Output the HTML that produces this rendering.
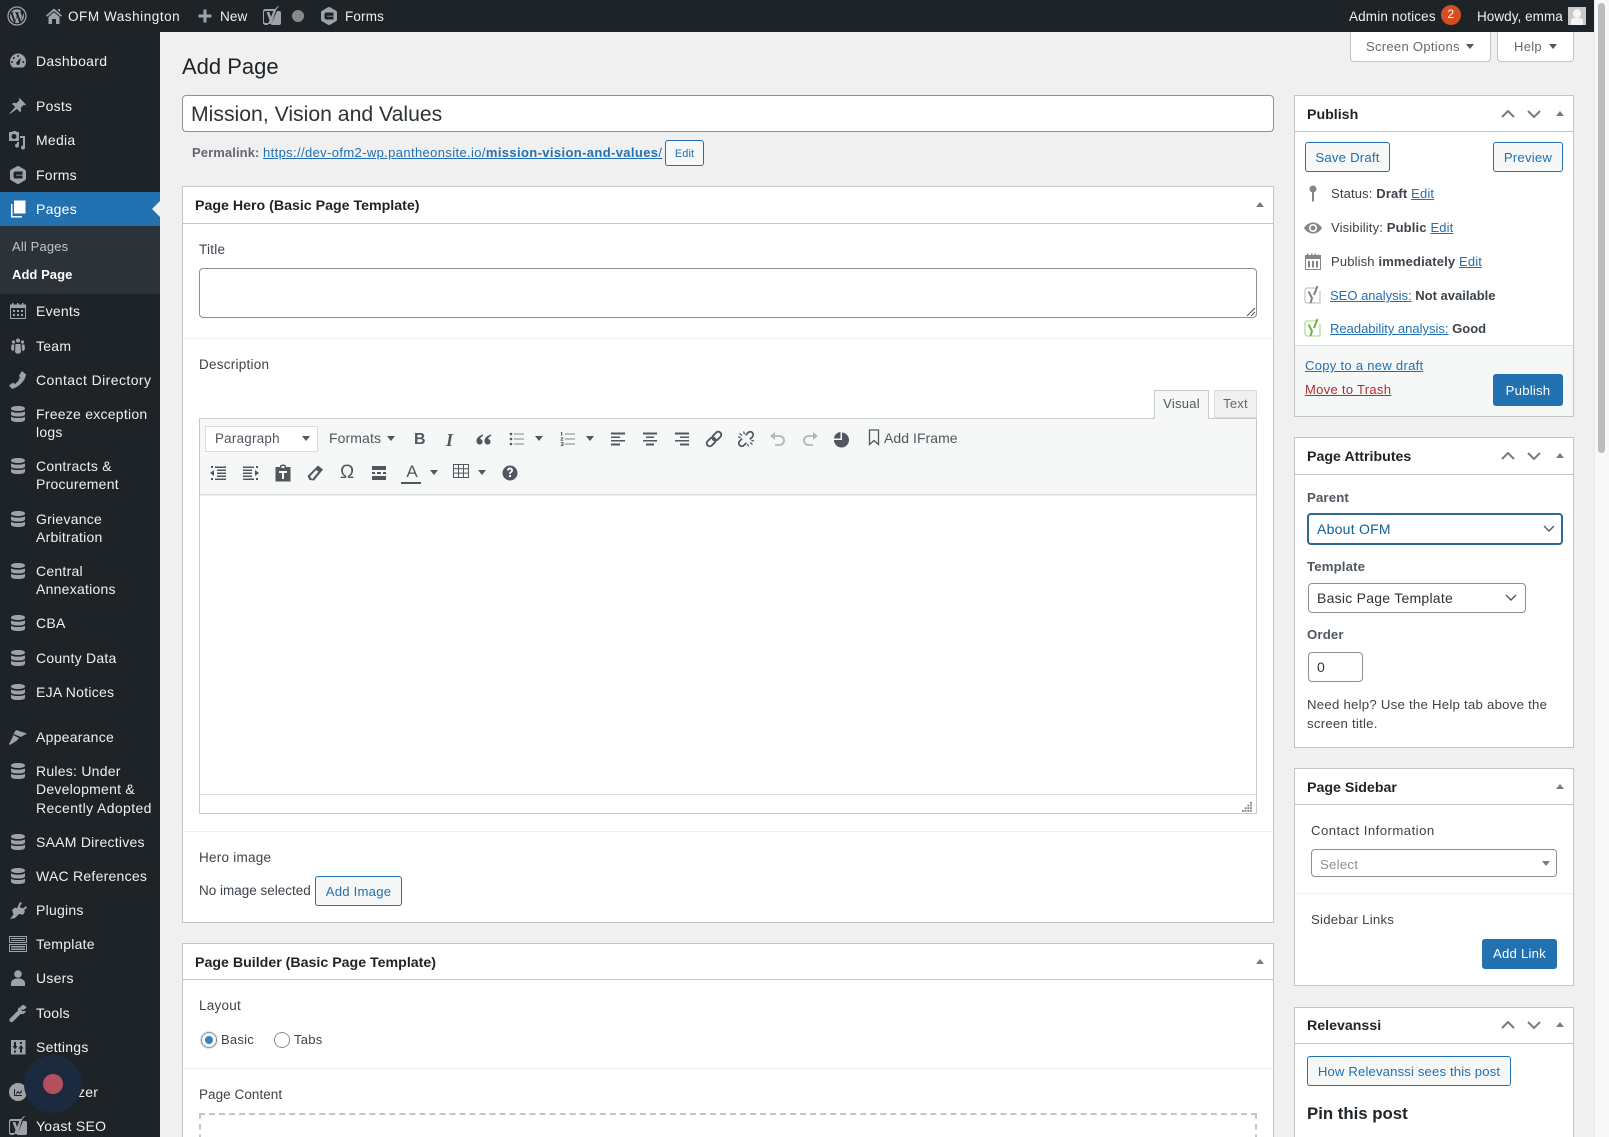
<!DOCTYPE html>
<html lang="en"><head><meta charset="utf-8"><title>Add Page</title>
<style>
*{box-sizing:border-box}
html{margin:0;padding:0;width:1609px;height:1137px;overflow:hidden}
body{margin:0;padding:0;width:1609px;height:1137px;overflow:hidden;background:#f0f0f1;position:relative;font-family:"Liberation Sans",sans-serif;font-size:13.5px;color:#3c434a;letter-spacing:.25px}
#w{position:absolute;left:0;top:0;width:1609px;height:1137px;overflow:hidden}
.t{position:absolute;white-space:nowrap;line-height:20px}
.b{position:absolute}
.s{color:#f0f0f1;font-size:14px;left:36px;letter-spacing:.25px}
.ab{color:#f0f0f1;font-size:13.5px;top:7px;letter-spacing:.15px}
svg{position:absolute;overflow:visible}
.ic{width:20px;height:20px;left:8px;fill:#9ea3a8}
.tb{width:20px;height:20px;fill:#50575e}
.p{position:absolute;background:#fff;border:1px solid #c3c4c7}
.h{position:absolute;height:1px;background:#c3c4c7}
.sep{position:absolute;height:1px;background:#f0f0f1}
.hd{font-weight:bold;color:#1d2327;font-size:14.2px;letter-spacing:0}
.btn{position:absolute;border:1px solid #2271b1;border-radius:3px;background:#f6f7f7;color:#2271b1;text-align:center;font-size:13.2px;letter-spacing:.2px}
.pri{position:absolute;background:#2271b1;border-radius:3px;color:#fff;text-align:center;font-size:13.2px;font-weight:500;letter-spacing:.2px}
.in{position:absolute;background:#fff;border:1px solid #8c8f94;border-radius:4px}
a{color:#2271b1;text-decoration:underline}
.ch{fill:none;stroke:#787c82;stroke-width:2}
.tri{position:absolute;width:0;height:0;border-left:4px solid transparent;border-right:4px solid transparent;border-top:5px solid #50575e}
.up{position:absolute;width:0;height:0;border-left:4px solid transparent;border-right:4px solid transparent;border-bottom:5px solid #787c82}
.st{position:absolute;width:20px;height:20px;fill:#82878c}
.l{font-size:13.2px;font-weight:bold;color:#50575e;letter-spacing:.15px}
.m{font-size:13px;letter-spacing:.15px}
.n{font-size:13px;letter-spacing:0}
b{font-weight:bold}
</style></head><body><div id="w">
<svg width="0" height="0" style="position:absolute"><defs>
<symbol id="db" viewBox="0 0 20 20"><path d="M3 4.500C3 2.800 6 2 10 2s7 .8 7 2.500-3 2.500-7 2.500-7-.8-7-2.500z"/><path d="M3 7.200C4 8.300 7 8.600 10 8.600s6-.3 7-1.400v3c0 1.500-3 2.300-7 2.300s-7-.8-7-2.300z"/><path d="M3 12.600C4 13.700 7 14 10 14s6-.3 7-1.400v3c0 1.600-3 2.400-7 2.400s-7-.8-7-2.400z"/></symbol>
<symbol id="hex" viewBox="0 0 20 20"><path fill-rule="evenodd" d="M9 1.300a2 2 0 0 1 2 0l6 3.400a2 2 0 0 1 1 1.700v7.200a2 2 0 0 1-1 1.700l-6 3.400a2 2 0 0 1-2 0l-6-3.400a2 2 0 0 1-1-1.700V6.400a2 2 0 0 1 1-1.700zM7.500 6.500A2 2 0 0 0 5.500 8.500v3a2 2 0 0 0 2 2h7v-3H8V9.800h6.500V6.500z"/></symbol>
<symbol id="yo" viewBox="0 0 20 20"><path fill-rule="evenodd" d="M3 3h10l3-3h1l-3 4v0l-4.500 14H6l1.500-4L4.500 6h2.800l1.800 5 2.200-6H3.500A1.500 1.500 0 0 0 2 6.500v9A1.500 1.500 0 0 0 3.500 17H6v2H3a2.500 2.500 0 0 1-2-2.500v-11A2.500 2.500 0 0 1 3 3z"/><path d="M15 5h2a2 2 0 0 1 2 2v10a2 2 0 0 1-2 2h-8l1-2.500L15 5z"/></symbol>
<symbol id="up" viewBox="0 0 16 10"><path d="M2 8l6-6 6 6" fill="none" stroke="#787c82" stroke-width="2"/></symbol>
<symbol id="dn" viewBox="0 0 16 10"><path d="M2 2l6 6 6-6" fill="none" stroke="#787c82" stroke-width="2"/></symbol>
</defs></svg>

<!-- admin bar -->
<div class="b" style="left:0;top:0;width:1594px;height:32px;background:#1d2327"></div>
<div class="b" style="left:1594px;top:0;width:15px;height:1137px;background:#f8f8f8;border-left:1px solid #ececec"></div>
<div class="b" style="left:1598px;top:3px;width:7px;height:450px;background:#bdbdbd;border-radius:4px"></div>
<svg style="left:7px;top:6px;width:20px;height:20px"><circle cx="10" cy="10" r="9" fill="none" stroke="#9ea3a8" stroke-width="1.300"/><path fill="#9ea3a8" d="M3 10c0 2.800 1.600 5.200 4 6.300L3.600 7.100A7 7 0 0 0 3 10zm11.600-.4c0-.9-.3-1.500-.6-2-.3-.5-.6-1-.6-1.500 0-.6.4-1.100 1-1.100h.1A7 7 0 0 0 4.100 6.200h.4c.7 0 1.900-.1 1.900-.1.400 0 .4.500 0 .6l-.8.100 2.600 7.800 1.600-4.700L8.700 7l-.7-.2c-.4 0-.3-.6 0-.6 0 0 1.200.1 1.900.1s1.900-.1 1.900-.1c.4 0 .4.500 0 .6l-.8.100 2.600 7.700.7-2.400c.3-1 .5-1.700.5-2.300zM10.100 10.600l-2.100 6.200a7 7 0 0 0 4.300-.1l-.1-.1zm6-4a5 5 0 0 1 .1.800c0 .7-.1 1.500-.5 2.500l-2.100 6.100A7 7 0 0 0 16.100 6.600z"/></svg>
<svg style="left:44px;top:6px;width:20px;height:20px" viewBox="0 0 20 20" fill="#9ea3a8"><path d="M10 2.500l8 7-1.200 1.200L10 5 3.200 10.700 2 9.500zM14 3h2v3l-2-1.800zM4.500 11L10 6.300l5.500 4.700v7H12v-5H8v5H4.500z"/></svg>
<div class="t ab" style="left:68px;letter-spacing:.55px">OFM Washington</div>
<svg style="left:197px;top:7px;width:16px;height:18px" viewBox="0 0 16 18"><path d="M6.500 2.500h3v5h5v3h-5v5h-3v-5h-5v-3h5z" fill="#9ea3a8"/></svg>
<div class="t ab" style="left:220px">New</div>
<svg style="left:262px;top:5px;width:20px;height:22px;fill:#9ea3a8" viewBox="0 0 20 20"><use href="#yo"/></svg>
<div class="b" style="left:292px;top:10px;width:12px;height:12px;border-radius:50%;background:#888"></div>
<svg style="left:319px;top:6px;width:20px;height:20px;fill:#9ea3a8" viewBox="0 0 20 20"><use href="#hex"/></svg>
<div class="t ab" style="left:345px">Forms</div>
<div class="t ab" style="left:1349px">Admin notices</div>
<div class="b" style="left:1441px;top:5px;width:20px;height:20px;border-radius:50%;background:#d54e21;color:#fff;text-align:center;line-height:19px;font-size:12px">2</div>
<div class="t ab" style="left:1477px;letter-spacing:.05px">Howdy, emma</div>
<div class="b" style="left:1568px;top:7px;width:18px;height:18px;background:#c9c9c9;overflow:hidden"><div class="b" style="left:5px;top:2px;width:8px;height:9px;border-radius:50%;background:#f4f4f4"></div><div class="b" style="left:3px;top:11px;width:12px;height:9px;border-radius:3px 3px 0 0;background:#f4f4f4"></div></div>

<!-- sidebar -->
<div class="b" style="left:0;top:32px;width:160px;height:1105px;background:#1d2327"></div>
<div class="b" style="left:0;top:192px;width:160px;height:34px;background:#2271b1"></div>
<div class="b" style="left:0;top:226px;width:160px;height:68px;background:#2c3338"></div>
<div class="b" style="left:152px;top:201px;border-top:8px solid transparent;border-bottom:8px solid transparent;border-right:8px solid #f0f0f1"></div>

<svg class="ic" style="top:51px" viewBox="0 0 20 20"><path fill-rule="evenodd" d="M10 2.500a8 8 0 0 1 8 8c0 2.500-1 4.700-2.700 6H4.700A8 8 0 0 1 2 10.500a8 8 0 0 1 8-8zM9.300 10.500a1.800 1.800 0 1 0 2.500 1.600l1-4.600-.6-.2zM10 4a1 1 0 1 0 0 2 1 1 0 0 0 0-2zM5.800 6a1 1 0 1 0 0 2 1 1 0 0 0 0-2zM4 10a1 1 0 1 0 0 2 1 1 0 0 0 0-2zm11.300 0a1 1 0 1 0 0 2 1 1 0 0 0 0-2z"/></svg>
<div class="t s" style="top:51px;letter-spacing:.32px">Dashboard</div>
<svg class="ic" style="top:96px" viewBox="0 0 20 20"><path d="M11.500 2l6.500 6.500-1.200 1-1-.6-3 3 .4 3.100-1.200 1.100-3-3.200L2 18l-.5-.5 5.800-6.500-3.100-3L5.300 6.800l3.100.4 3-3-.6-1z"/></svg>
<div class="t s" style="top:96px">Posts</div>
<svg class="ic" style="top:130px" viewBox="0 0 20 20"><path fill-rule="evenodd" d="M1 2h3l1-1h3l1 1h2v9H1zm5 2a2.500 2.500 0 1 0 0 5 2.500 2.500 0 0 0 0-5z"/><path d="M13 5h5v11.500a2 2 0 1 1-2-2V7h-3zM12 11v3.500a2 2 0 1 1-2-1.900V11z" transform="translate(-1 1)"/></svg>
<div class="t s" style="top:130px">Media</div>
<svg class="ic" style="top:165px" viewBox="0 0 20 20"><use href="#hex"/></svg>
<div class="t s" style="top:165px">Forms</div>
<svg class="ic" style="top:199px;fill:#fff" viewBox="0 0 20 20"><path d="M6 1.500h11.500v13H6z"/><path d="M3 5h1.500v12H14v1.500H3z"/></svg>
<div class="t s" style="top:199px;color:#fff">Pages</div>
<div class="t" style="left:12px;top:237px;font-size:13px;color:#c3c4c7;letter-spacing:.15px">All Pages</div>
<div class="t" style="left:12px;top:265px;font-size:13px;color:#fff;font-weight:bold;letter-spacing:.05px">Add Page</div>

<svg class="ic" style="top:301px" viewBox="0 0 20 20"><path fill-rule="evenodd" d="M2 3.500h2V2h1.500v1.500h3.500V2h1.500v1.500h3.500V2h1.500v1.500h2.500V18H2zM3 7v10h14V7zm2 2h2v2H5zm4 0h2v2H9zm4 0h2v2h-2zM5 13h2v2H5zm4 0h2v2H9zm4 0h2v2h-2z"/></svg>
<div class="t s" style="top:301px">Events</div>
<svg class="ic" style="top:336px" viewBox="0 0 20 20"><circle cx="10" cy="4.500" r="2"/><circle cx="5.500" cy="6" r="1.600"/><circle cx="14.500" cy="6" r="1.600"/><path d="M7.500 8h5l.5 8-1.200 1.500H8.200L7 16zM3.500 8.500h2.800L6 14.500 4.500 15l-1.500-2zM13.700 8.500h2.800l.5 4.500-1.500 2-1.500-.5z"/></svg>
<div class="t s" style="top:336px">Team</div>
<svg class="ic" style="top:370px" viewBox="0 0 20 20"><path d="M14 1l4 3.500c-.3 5-6 12-14 14.500l-3-3.500 4-3 2 1.500c2-1.500 4-4 5-6.500L11 5.500z"/></svg>
<div class="t s" style="top:370px;letter-spacing:.43px">Contact Directory</div>
<svg class="ic" style="top:404px" viewBox="0 0 20 20"><use href="#db"/></svg>
<div class="t s" style="top:404px">Freeze exception</div><div class="t s" style="top:422px">logs</div>
<svg class="ic" style="top:456px" viewBox="0 0 20 20"><use href="#db"/></svg>
<div class="t s" style="top:456px">Contracts &amp;</div><div class="t s" style="top:474px">Procurement</div>
<svg class="ic" style="top:509px" viewBox="0 0 20 20"><use href="#db"/></svg>
<div class="t s" style="top:509px">Grievance</div><div class="t s" style="top:527px">Arbitration</div>
<svg class="ic" style="top:561px" viewBox="0 0 20 20"><use href="#db"/></svg>
<div class="t s" style="top:561px">Central</div><div class="t s" style="top:579px">Annexations</div>
<svg class="ic" style="top:613px" viewBox="0 0 20 20"><use href="#db"/></svg>
<div class="t s" style="top:613px">CBA</div>
<svg class="ic" style="top:648px" viewBox="0 0 20 20"><use href="#db"/></svg>
<div class="t s" style="top:648px">County Data</div>
<svg class="ic" style="top:682px" viewBox="0 0 20 20"><use href="#db"/></svg>
<div class="t s" style="top:682px">EJA Notices</div>
<svg class="ic" style="top:727px" viewBox="0 0 20 20"><path d="M8 3l11 3.500-6 3.500L5.500 7zM5 8l6 3-2 2.500L2 18l-1-1 3.500-6.500z"/></svg>
<div class="t s" style="top:727px">Appearance</div>
<svg class="ic" style="top:761px" viewBox="0 0 20 20"><use href="#db"/></svg>
<div class="t s" style="top:761px">Rules: Under</div><div class="t s" style="top:779px">Development &amp;</div><div class="t s" style="top:798px;letter-spacing:.38px">Recently Adopted</div>
<svg class="ic" style="top:832px" viewBox="0 0 20 20"><use href="#db"/></svg>
<div class="t s" style="top:832px">SAAM Directives</div>
<svg class="ic" style="top:866px" viewBox="0 0 20 20"><use href="#db"/></svg>
<div class="t s" style="top:866px">WAC References</div>
<svg class="ic" style="top:900px" viewBox="0 0 20 20"><path d="M12 2l2 1-2.500 4L15 8.500l3-2.500 1 1.700-3 2.500 1 1.500-2 3-4-.7-4 4L2 19l3.500-4.500L4 10l3-2.500 2 .8z"/></svg>
<div class="t s" style="top:900px">Plugins</div>
<svg class="ic" style="top:934px" viewBox="0 0 20 20"><path fill-rule="evenodd" d="M1 2h18v7H1zm1 1v5h16V3zm1 1h14v1H3zm0 2h14v1H3zM1 10h18v8H1zm1 1v6h16v-6zm1 1h14v1.500H3zm0 2.500h14V16H3z"/></svg>
<div class="t s" style="top:934px">Template</div>
<svg class="ic" style="top:968px" viewBox="0 0 20 20"><circle cx="10" cy="6" r="3.800"/><path d="M3 18v-3c0-2.500 3-4 4.500-4.500h5C14 11 17 12.500 17 15v3z"/></svg>
<div class="t s" style="top:968px">Users</div>
<svg class="ic" style="top:1003px" viewBox="0 0 20 20"><path d="M14.500 2a4.500 4.500 0 0 1 4 2.500L15.500 7l-2.500-.8-.5-2.500L15 1.500zM12 4l2 4 4 0c-.7 2-3 3.500-5.500 3L5 18.500a2 2 0 0 1-3-3L10 7.500C9.700 6 10.500 4.500 12 4z"/></svg>
<div class="t s" style="top:1003px">Tools</div>
<svg class="ic" style="top:1037px" viewBox="0 0 20 20"><path fill-rule="evenodd" d="M3 3h14.500v14.500H3zM6 5v4H4.500L7 12.500 9.500 9H8V5zm0 8.500v2h2v-2zM14 15.500v-4h1.500L13 8l-2.500 3.500H12v4zM12 7h2V5h-2z"/></svg>
<div class="t s" style="top:1037px">Settings</div>
<svg class="ic" style="top:1082px" viewBox="0 0 20 20"><path fill-rule="evenodd" d="M10 1a9 9 0 1 1 0 18 9 9 0 0 1 0-18zM6 7v7h8v-1H7V7zm2 4l2-2 1.500 1.500L14 8v2l-2.500 2L10 10.500 8 12.500z"/></svg>
<div class="t s" style="top:1082px">Optimizer</div>
<svg class="ic" style="top:1116px" viewBox="0 0 20 20"><use href="#yo"/></svg>
<div class="t s" style="top:1116px">Yoast SEO</div>
<div class="b" style="left:24px;top:1055px;width:58px;height:58px;border-radius:50%;background:#1b2a3f"></div>
<div class="b" style="left:43px;top:1074px;width:20px;height:20px;border-radius:50%;background:#b4505e"></div>

<!-- screen options -->
<div class="b" style="left:1350px;top:32px;width:141px;height:30px;background:#fff;border:1px solid #c3c4c7;border-top:0;border-radius:0 0 4px 4px"></div>
<div class="t" style="left:1366px;top:37px;color:#646970;font-size:13px;letter-spacing:.3px">Screen Options</div>
<div class="tri" style="left:1466px;top:44px"></div>
<div class="b" style="left:1497px;top:32px;width:77px;height:30px;background:#fff;border:1px solid #c3c4c7;border-top:0;border-radius:0 0 4px 4px"></div>
<div class="t" style="left:1514px;top:37px;color:#646970;font-size:13px;letter-spacing:.3px">Help</div>
<div class="tri" style="left:1549px;top:44px"></div>

<div class="t" style="left:182px;top:53px;font-size:22px;line-height:28px;color:#1d2327;letter-spacing:0">Add Page</div>
<div class="in" style="left:182px;top:95px;width:1092px;height:37px"></div>
<div class="t" style="left:191px;top:99px;font-size:21.200px;line-height:32px;color:#2c3338;letter-spacing:0">Mission, Vision and Values</div>
<div class="t" style="left:192px;top:143px;font-size:13px;color:#646970;font-weight:bold;letter-spacing:.1px">Permalink:</div>
<div class="t" style="left:263px;top:143px;font-size:13px;letter-spacing:.37px"><a>https://dev-ofm2-wp.pantheonsite.io/<b>mission-vision-and-values</b>/</a></div>
<div class="btn" style="left:665px;top:140px;width:39px;height:26px;font-size:11px;line-height:26px;letter-spacing:.1px">Edit</div>

<!-- page hero -->
<div class="p" style="left:182px;top:186px;width:1092px;height:737px"></div>
<div class="h" style="left:182px;top:223px;width:1092px"></div>
<div class="t hd" style="left:195px;top:196px">Page Hero (Basic Page Template)</div>
<div class="up" style="left:1256px;top:202px"></div>
<div class="t" style="left:199px;top:240px">Title</div>
<div class="in" style="left:199px;top:268px;width:1058px;height:50px"></div>
<svg style="left:1246px;top:307px;width:10px;height:10px"><path d="M9 1L1 9M9 5L5 9" stroke="#50575e" fill="none"/></svg>
<div class="sep" style="left:183px;top:338px;width:1090px"></div>
<div class="t" style="left:199px;top:355px">Description</div>

<div class="b" style="left:199px;top:418px;width:1058px;height:396px;background:#fff;border:1px solid #c9cbce"></div>
<div class="b" style="left:200px;top:419px;width:1056px;height:76px;background:#f6f7f7;border-bottom:1px solid #dcdcde;box-shadow:0 1px 1px rgba(0,0,0,.08)"></div>
<div class="b" style="left:1154px;top:390px;width:55px;height:29px;background:#f6f7f7;border:1px solid #c9cbce;border-bottom:0;text-align:center;line-height:26px;color:#50575e;font-size:13px">Visual</div>
<div class="b" style="left:1214px;top:390px;width:43px;height:28px;background:#f0f0f1;border:1px solid #dcdcde;text-align:center;line-height:26px;color:#646970;font-size:13px">Text</div>

<div class="b" style="left:205px;top:426px;width:113px;height:26px;background:#fff;border:1px solid #dcdcde"></div>
<div class="t" style="left:215px;top:429px;font-size:13.400px;color:#50575e">Paragraph</div>
<div class="tri" style="left:302px;top:436px"></div>
<div class="t" style="left:329px;top:428px;font-size:14px;color:#50575e;letter-spacing:.1px">Formats</div>
<div class="tri" style="left:387px;top:436px"></div>

<div class="t" style="left:414px;top:430px;font-size:16px;font-weight:bold;color:#50575e;font-family:'Liberation Sans',sans-serif">B</div>
<div class="t" style="left:446px;top:430px;font-size:18px;font-style:italic;font-weight:bold;color:#50575e;font-family:'Liberation Serif',serif">I</div>
<svg class="tb" style="left:474px;top:429px" viewBox="0 0 20 20"><path d="M9 5.500C5.500 6.500 2.500 8.500 2.500 12c0 2 1.200 3.500 3 3.500S8.500 14.300 8.500 12.700 7.300 10 6 10c.3-1.200 1.500-2.500 3-3zM17 5.500c-3.500 1-6.500 3-6.500 6.500 0 2 1.200 3.500 3 3.500s3-1.200 3-2.800-1.200-2.700-2.500-2.700c.3-1.200 1.500-2.500 3-3z"/></svg>
<svg class="tb" style="left:507px;top:429px" viewBox="0 0 20 20"><circle cx="4" cy="5" r="1.300"/><circle cx="4" cy="10" r="1.300"/><circle cx="4" cy="15" r="1.300"/><path fill="#82878c" d="M7 4.500h10v1H7zm0 5h10v1H7zm0 5h10v1H7z"/></svg>
<div class="tri" style="left:535px;top:436px"></div>
<svg class="tb" style="left:558px;top:429px" viewBox="0 0 20 20"><path fill="#82878c" d="M7 4.500h10v1H7zm0 5h10v1H7zm0 5h10v1H7z"/><path d="M3 3h1.200v4H3zM2.500 9h3v.8L3.500 11.500h2v.8h-3v-.8l2-1.700h-2zM2.500 14h3v4h-3v-.8h2v-.8H3v-.7h1.500v-.9h-2z" transform="scale(1 .95)"/></svg>
<div class="tri" style="left:586px;top:436px"></div>
<svg class="tb" style="left:608px;top:429px" viewBox="0 0 20 20"><path d="M3 3.500h14v2H3zM3 7.500h9v1.500H3zM3 11h14v1.500H3zM3 14.500h9v2H3z"/></svg>
<svg class="tb" style="left:640px;top:429px" viewBox="0 0 20 20"><path d="M3 3.500h14v2H3zM6 7.500h8v1.500H6zM3 11h14v1.500H3zM6 14.500h8v2H6z"/></svg>
<svg class="tb" style="left:672px;top:429px" viewBox="0 0 20 20"><path d="M3 3.500h14v2H3zM8 7.500h9v1.500H8zM3 11h14v1.500H3zM8 14.500h9v2H8z"/></svg>
<svg class="tb" style="left:704px;top:429px" viewBox="0 0 20 20"><g transform="rotate(-45 10 10)" fill="none" stroke="#50575e" stroke-width="1.900"><rect x="1" y="7" width="10" height="6" rx="3"/><rect x="9" y="7" width="10" height="6" rx="3"/></g></svg>
<svg class="tb" style="left:736px;top:429px" viewBox="0 0 20 20"><g transform="rotate(-45 10 10)" fill="none" stroke="#50575e" stroke-width="1.700"><path d="M7.500 7H4a3 3 0 0 0 0 6h3.500M12.500 7H16a3 3 0 0 1 0 6h-3.500"/></g><path d="M3.500 4.500l2.500 2M16.500 15.500l-2.500-2M7.500 2.500L8.500 5M12.500 17.500l-1-2.500M2 8l2.700.5M18 12l-2.700-.5" stroke="#50575e" fill="none" stroke-width="1.200"/></svg>
<svg class="tb" style="left:768px;top:429px;fill:#b4b7ba" viewBox="0 0 20 20"><path d="M2 7l5-4v8z"/><path d="M6 7h5.500a4.500 4.500 0 0 1 0 9H7" fill="none" stroke="#b4b7ba" stroke-width="1.800"/></svg>
<svg class="tb" style="left:800px;top:429px;fill:#b4b7ba" viewBox="0 0 20 20"><path d="M18 7l-5-4v8z"/><path d="M14 7H8.500a4.500 4.500 0 0 0 0 9H13" fill="none" stroke="#b4b7ba" stroke-width="1.800"/></svg>
<svg class="tb" style="left:831px;top:429px" viewBox="0 0 20 20"><path fill-rule="evenodd" d="M11 3.500a7.500 7.500 0 1 1-8 7.500h8zM9.500 3v6.500H3A7 7 0 0 1 9.500 3z"/></svg>
<svg style="left:868px;top:429px;width:12px;height:17px" viewBox="0 0 12 17"><path d="M1.500 1h9v14.500L6 11.500l-4.500 4z" fill="none" stroke="#50575e" stroke-width="1.300"/></svg>
<div class="t" style="left:884px;top:428px;font-size:14px;color:#50575e;letter-spacing:.05px">Add IFrame</div>

<svg class="tb" style="left:208px;top:463px" viewBox="0 0 20 20"><path d="M7 3.500h11V5H7zM9 6.500h9V8H9zM9 9.500h9V11H9zM9 12.500h9V14H9zM7 15.500h11V17H7zM2 10l4-3v6zM3 3h2v2H3zM3 15h2v2H3z"/></svg>
<svg class="tb" style="left:241px;top:463px" viewBox="0 0 20 20"><path d="M2 3.500h11V5H2zM2 6.500h9V8H2zM2 9.500h9V11H2zM2 12.500h9V14H2zM2 15.500h11V17H2zM18 10l-4-3v6zM15 3h2v2h-2zM15 15h2v2h-2z"/></svg>
<svg class="tb" style="left:273px;top:463px" viewBox="0 0 20 20"><path fill-rule="evenodd" d="M2.500 4H7V2.500L9 1.500h2L13 2.500V4h4.500v14.500h-15zM8.500 3v2h3V3zM6 8v2h3v6h2v-6h3V8z"/></svg>
<svg class="tb" style="left:305px;top:463px" viewBox="0 0 20 20"><path fill-rule="evenodd" d="M13 2.500l5 4-9 11-4.500-.5L2.500 13zM11 7L5 13.500l1.500 2L7.500 16l6-7.500z"/></svg>
<div class="t" style="left:340px;top:463px;font-size:19px;color:#50575e;letter-spacing:0">Ω</div>
<svg class="tb" style="left:369px;top:463px" viewBox="0 0 20 20"><path d="M3 3h14v4H3zM3 9h3v2H3zM8 9h4v2H8zM14 9h3v2h-3zM3 13h14v4H3z"/></svg>
<div class="t" style="left:402px;top:462px;width:20px;text-align:center;font-size:17px;color:#50575e;letter-spacing:0">A</div>
<div class="b" style="left:401px;top:482px;width:20px;height:2px;background:#50575e"></div>
<div class="tri" style="left:430px;top:470px"></div>
<svg class="tb" style="left:451px;top:461px" viewBox="0 0 20 20"><path fill="none" stroke="#50575e" d="M2.500 3.500h15v13h-15zM7.500 3.500v13M12.500 3.500v13M2.500 7.800h15M2.500 12.100h15"/></svg>
<div class="tri" style="left:478px;top:470px"></div>
<svg class="tb" style="left:500px;top:463px" viewBox="0 0 20 20"><path fill-rule="evenodd" d="M10 2.500a7.500 7.500 0 1 1 0 15 7.500 7.500 0 0 1 0-15zM9 12v2h2v-2zM7 7.500h2c0-.7.4-1 1-1s1 .3 1 1-.5.9-1 1.300-1 1-1 2.100h2c0-.8.4-1 1-1.500s1-1 1-2c0-1.700-1.300-2.900-3-2.900S7 5.700 7 7.500z"/></svg>

<div class="b" style="left:200px;top:794px;width:1056px;height:1px;background:#dcdcde"></div>
<svg style="left:1242px;top:801px;width:12px;height:12px" viewBox="0 0 12 12"><path d="M9 1h2v2H9zM6 4h2v2H6zM9 4h2v2H9zM3 7h2v2H3zM6 7h2v2H6zM9 7h2v2H9zM0 10h2v2H0zM3 10h2v2H3zM6 10h2v2H6zM9 10h2v2H9z" fill="#787c82" transform="scale(.9)"/></svg>
<div class="sep" style="left:183px;top:831px;width:1090px"></div>
<div class="t" style="left:199px;top:848px">Hero image</div>
<div class="t" style="left:199px;top:881px;letter-spacing:0">No image selected</div>
<div class="btn" style="left:315px;top:876px;width:87px;height:30px;line-height:30px">Add Image</div>

<!-- page builder -->
<div class="p" style="left:182px;top:943px;width:1092px;height:200px"></div>
<div class="h" style="left:182px;top:979px;width:1092px"></div>
<div class="t hd" style="left:195px;top:953px">Page Builder (Basic Page Template)</div>
<div class="up" style="left:1256px;top:959px"></div>
<div class="t" style="left:199px;top:996px">Layout</div>
<div class="b" style="left:201px;top:1032px;width:16px;height:16px;border-radius:50%;border:1px solid #8c8f94;background:#fff;box-shadow:0 0 0 1px #d5e5f2"></div>
<div class="b" style="left:205px;top:1036px;width:8px;height:8px;border-radius:50%;background:#3582c4"></div>
<div class="t" style="left:221px;top:1030px;font-size:13px">Basic</div>
<div class="b" style="left:274px;top:1032px;width:16px;height:16px;border-radius:50%;border:1px solid #8c8f94;background:#fff"></div>
<div class="t" style="left:294px;top:1030px;font-size:13px">Tabs</div>
<div class="sep" style="left:183px;top:1068px;width:1090px"></div>
<div class="t" style="left:199px;top:1085px;letter-spacing:.05px">Page Content</div>
<div class="b" style="left:199px;top:1113px;width:1058px;height:60px;border:2px dashed #c3c4c7"></div>

<!-- publish -->
<div class="p" style="left:1294px;top:95px;width:280px;height:322px"></div>
<div class="h" style="left:1294px;top:131px;width:280px"></div>
<div class="t hd" style="left:1307px;top:105px">Publish</div>
<svg style="left:1500px;top:109px;width:16px;height:10px"><use href="#up"/></svg>
<svg style="left:1526px;top:109px;width:16px;height:10px"><use href="#dn"/></svg>
<div class="up" style="left:1556px;top:111px"></div>
<div class="btn" style="left:1305px;top:142px;width:85px;height:30px;line-height:30px">Save Draft</div>
<div class="btn" style="left:1493px;top:142px;width:70px;height:30px;line-height:30px">Preview</div>
<svg class="st" style="left:1303px;top:183px" viewBox="0 0 20 20"><circle cx="10" cy="6" r="3.500"/><path d="M9 8h2v10l-1 1-1-1z"/></svg>
<div class="t m" style="left:1331px;top:184px">Status: <b>Draft</b> <a>Edit</a></div>
<svg class="st" style="left:1303px;top:218px" viewBox="0 0 20 20"><path fill-rule="evenodd" d="M10 4.500c4.500 0 7.500 3 9 5.500-1.500 2.500-4.500 5.500-9 5.500S2.500 12.500 1 10c1.500-2.500 4.500-5.500 9-5.500zM10 6c-2.500 0-4 1.800-4 4s1.500 4 4 4 4-1.800 4-4-1.500-4-4-4zm0 1.500a2.500 2.500 0 1 1 0 5 2.500 2.500 0 0 1 0-5z"/></svg>
<div class="t m" style="left:1331px;top:218px">Visibility: <b>Public</b> <a>Edit</a></div>
<svg class="st" style="left:1303px;top:252px" viewBox="0 0 20 20"><path fill-rule="evenodd" d="M2 3h2V1.500h1.500V3h2.500V1.500h1.500V3h2V1.500h1.500V3h2.500V1.500H16V3h2v15H2zm1 4v10h14V7zm2 2h2v6.500H5zm4 0h2v6.500H9zm4 0h2v6.500h-2z"/></svg>
<div class="t m" style="left:1331px;top:252px">Publish <b>immediately</b> <a>Edit</a></div>
<svg style="left:1304px;top:285px;width:19px;height:20px" viewBox="0 0 19 20"><path d="M13 3H3a2 2 0 0 0-2 2v11a2 2 0 0 0 2 2h13V6" fill="none" stroke="#c8c9cb" stroke-width="1.300"/><path d="M4.500 6.500L8 13l-1.500 5M13.500 1L10 10" fill="none" stroke="#7e8286" stroke-width="2"/></svg>
<div class="t n" style="left:1330px;top:286px"><a>SEO analysis:</a> <b>Not available</b></div>
<svg style="left:1304px;top:318px;width:19px;height:20px" viewBox="0 0 19 20"><path d="M13 3H3a2 2 0 0 0-2 2v11a2 2 0 0 0 2 2h13V6" fill="none" stroke="#b4dc9a" stroke-width="1.300"/><path d="M4.500 6.500L8 13l-1.500 5M13.500 1L10 10" fill="none" stroke="#6db33f" stroke-width="2"/></svg>
<div class="t n" style="left:1330px;top:319px"><a>Readability analysis:</a> <b>Good</b></div>
<div class="b" style="left:1295px;top:345px;width:278px;height:71px;background:#f6f7f7;border-top:1px solid #dcdcde"></div>
<div class="t" style="left:1305px;top:356px;font-size:13px;letter-spacing:.3px"><a>Copy to a new draft</a></div>
<div class="t" style="left:1305px;top:380px;font-size:13px;letter-spacing:.3px"><a style="color:#b32d2e">Move to Trash</a></div>
<div class="pri" style="left:1493px;top:374px;width:70px;height:32px;line-height:33px">Publish</div>

<!-- attributes -->
<div class="p" style="left:1294px;top:437px;width:280px;height:311px"></div>
<div class="h" style="left:1294px;top:474px;width:280px"></div>
<div class="t hd" style="left:1307px;top:447px">Page Attributes</div>
<svg style="left:1500px;top:451px;width:16px;height:10px"><use href="#up"/></svg>
<svg style="left:1526px;top:451px;width:16px;height:10px"><use href="#dn"/></svg>
<div class="up" style="left:1556px;top:453px"></div>
<div class="t l" style="left:1307px;top:488px">Parent</div>
<div class="in" style="left:1307px;top:513px;width:256px;height:32px;border:2px solid #2c6a93;color:#135e96;line-height:28px;padding-left:8px;font-size:14px">About OFM</div>
<svg style="left:1543px;top:525px;width:12px;height:8px" viewBox="0 0 12 8"><path d="M1 1l5 5 5-5" class="ch" style="stroke:#50575e;stroke-width:1.400"/></svg>
<div class="t l" style="left:1307px;top:557px">Template</div>
<div class="in" style="left:1308px;top:583px;width:218px;height:30px;color:#2c3338;line-height:28px;padding-left:8px;font-size:14px">Basic Page Template</div>
<svg style="left:1505px;top:594px;width:12px;height:8px" viewBox="0 0 12 8"><path d="M1 1l5 5 5-5" class="ch" style="stroke:#50575e;stroke-width:1.400"/></svg>
<div class="t l" style="left:1307px;top:625px">Order</div>
<div class="in" style="left:1308px;top:652px;width:55px;height:30px;color:#2c3338;line-height:28px;padding-left:8px;font-size:14px">0</div>
<div class="t" style="left:1307px;top:695px;font-size:13.200px">Need help? Use the Help tab above the</div>
<div class="t" style="left:1307px;top:714px;font-size:13.200px">screen title.</div>

<!-- sidebar panel -->
<div class="p" style="left:1294px;top:768px;width:280px;height:218px"></div>
<div class="h" style="left:1294px;top:804px;width:280px"></div>
<div class="t hd" style="left:1307px;top:778px">Page Sidebar</div>
<div class="up" style="left:1556px;top:784px"></div>
<div class="t" style="left:1311px;top:821px;font-size:13.200px;letter-spacing:.45px">Contact Information</div>
<div class="in" style="left:1311px;top:849px;width:246px;height:28px;line-height:29px;padding-left:8px;color:#8c8f94;font-size:13.200px">Select</div>
<div class="tri" style="left:1542px;top:861px;border-top-color:#787c82"></div>
<div class="sep" style="left:1295px;top:893px;width:278px"></div>
<div class="t" style="left:1311px;top:910px;font-size:13.200px">Sidebar Links</div>
<div class="pri" style="left:1482px;top:939px;width:75px;height:30px;line-height:30px">Add Link</div>

<!-- relevanssi -->
<div class="p" style="left:1294px;top:1007px;width:280px;height:140px"></div>
<div class="h" style="left:1294px;top:1043px;width:280px"></div>
<div class="t hd" style="left:1307px;top:1016px">Relevanssi</div>
<svg style="left:1500px;top:1020px;width:16px;height:10px"><use href="#up"/></svg>
<svg style="left:1526px;top:1020px;width:16px;height:10px"><use href="#dn"/></svg>
<div class="up" style="left:1556px;top:1022px"></div>
<div class="btn" style="left:1307px;top:1056px;width:204px;height:30px;line-height:30px;letter-spacing:.12px">How Relevanssi sees this post</div>
<div class="t" style="left:1307px;top:1104px;font-size:16.800px;font-weight:bold;color:#1d2327;letter-spacing:0">Pin this post</div>
</div></body></html>
